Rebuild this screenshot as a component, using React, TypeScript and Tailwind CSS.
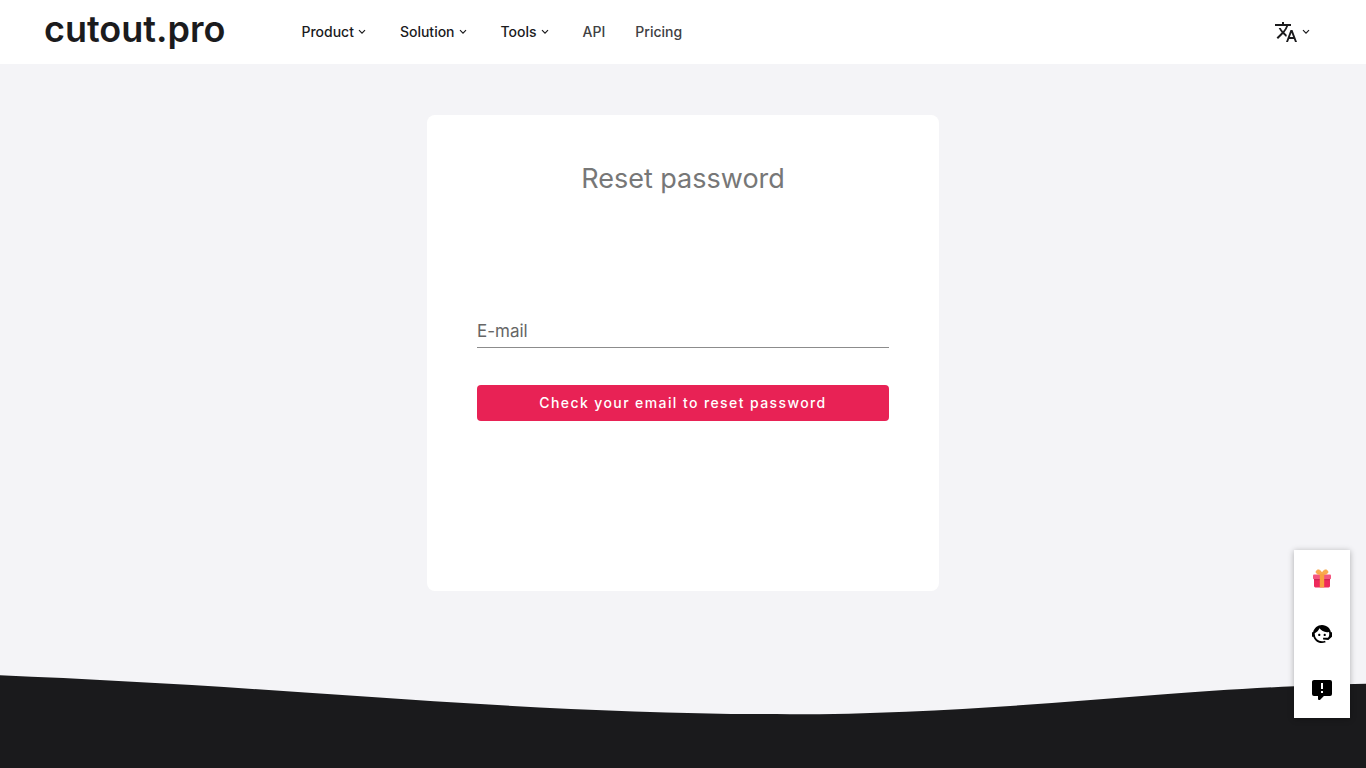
import React, { useState } from "react";
import { MdTranslate } from "react-icons/md";

const menuItems = ["Product", "Solution", "Tools"];

const linkItems = [
  { label: "API", href: "#api" },
  { label: "Pricing", href: "#pricing" },
];

const Chevron: React.FC = () => (
  <svg viewBox="0 0 8 6" className="w-2 h-[6px]" fill="none" stroke="currentColor" strokeWidth="1.2">
    <path d="M1 1.2L4 4.2L7 1.2" />
  </svg>
);

const GiftIcon: React.FC = () => (
  <svg viewBox="0 0 20 20" className="w-5 h-5">
    <path d="M2 11H18V18Q18 19.4 16.6 19.4H3.4Q2 19.4 2 18Z" fill="#ee2a5c" />
    <rect x="1" y="6.4" width="18" height="4.8" rx="1" fill="#f4567f" />
    <rect x="2" y="11.2" width="16" height="1" fill="#c92450" />
    <rect x="7.8" y="6.4" width="4.4" height="13" fill="#f9a03f" />
    <path
      d="M10 6.4C7 6.6 4 6 4.2 3.8C4.5 1.4 8.2 .8 10 5.4C11.8 .8 15.5 1.4 15.8 3.8C16 6 13 6.6 10 6.4Z"
      fill="#f9ac4e"
      stroke="#f9a03f"
      strokeWidth="1"
    />
  </svg>
);

const AgentIcon: React.FC = () => (
  <svg viewBox="0 0 24 24" className="w-6 h-6" fill="currentColor">
    <path d="M18.72,14.76C19.07,13.91 19.26,13 19.26,12C19.26,11.28 19.15,10.59 18.96,9.95C18.31,10.1 17.63,10.18 16.92,10.18C13.86,10.18 11.15,8.67 9.5,6.34C8.61,8.5 6.91,10.26 4.77,11.22C4.73,11.47 4.73,11.74 4.73,12A7.27,7.27 0 0,0 12,19.27C13.05,19.27 14.06,19.04 14.97,18.63C15.54,19.72 15.8,20.26 15.78,20.26C14.14,20.81 12.87,21.08 12,21.08C9.58,21.08 7.27,20.13 5.57,18.42C4.53,17.38 3.76,16.11 3.33,14.73H2V10.18H3.09C3.93,6.04 7.6,2.92 12,2.92C14.4,2.92 16.71,3.87 18.42,5.58C19.69,6.84 20.54,8.45 20.89,10.18H22V14.73H21.94L18.38,18L13.08,17.4V15.73H17.91L18.72,14.76M9.27,11.77C9.57,11.77 9.86,11.89 10.07,12.11C10.28,12.32 10.4,12.61 10.4,12.91C10.4,13.21 10.28,13.5 10.07,13.71C9.86,13.92 9.57,14.04 9.27,14.04C8.64,14.04 8.13,13.54 8.13,12.91C8.13,12.28 8.64,11.77 9.27,11.77M14.72,11.77C15.35,11.77 15.85,12.28 15.85,12.91C15.85,13.54 15.35,14.04 14.72,14.04C14.09,14.04 13.58,13.54 13.58,12.91A1.14,1.14 0 0,1 14.72,11.77Z" />
  </svg>
);

const FeedbackIcon: React.FC = () => (
  <svg viewBox="0 0 24 24" className="w-6 h-6" fill="currentColor" fillRule="evenodd">
    <path d="M13,11H11V5H13V11M13,15H11V13H13V15M9,22A1,1 0 0,1 8,21V18H4A2,2 0 0,1 2,16V4C2,2.89 2.9,2 4,2H20A2,2 0 0,1 22,4V16A2,2 0 0,1 20,18H13.9L10.2,21.71C10,21.9 9.75,22 9.5,22H9Z" />
  </svg>
);

const Header: React.FC = () => (
  <header className="flex items-center h-16 pl-11 pr-14 bg-white">
    <a href="#home" className="pb-1.5 text-4xl font-semibold text-[#1b1b1d]">
      cutout.pro
    </a>

    <nav className="flex items-center gap-[34px] ml-19 text-sm font-medium">
      {menuItems.map((label) => (
        <button key={label} className="flex items-center gap-1">
          {label}
          <Chevron />
        </button>
      ))}
      <div className="flex items-center gap-[30px] text-[#404042]">
        {linkItems.map((item) => (
          <a key={item.label} href={item.href}>
            {item.label}
          </a>
        ))}
      </div>
    </nav>

    <button aria-label="Language" className="flex items-center gap-1 ml-auto">
      <MdTranslate className="w-6 h-6" />
      <Chevron />
    </button>
  </header>
);

const ResetCard: React.FC = () => {
  const [email, setEmail] = useState("");

  const handleSubmit = (e: React.FormEvent) => {
    e.preventDefault();
  };

  return (
    <form
      onSubmit={handleSubmit}
      className="w-full max-w-lg px-[50px] pt-11 pb-[170px] bg-white rounded-lg"
    >
      <h1 className="text-[27px] leading-10 text-center text-[#777777]">Reset password</h1>

      <div className="relative mt-[116px] border-b border-[#8c8c8c]">
        {/* label sits inside the field until something is typed */}
        {!email && (
          <label
            htmlFor="email"
            className="absolute left-0 top-0 text-[17px] leading-8 text-[#666666] pointer-events-none"
          >
            E-mail
          </label>
        )}
        <input
          id="email"
          type="email"
          aria-label="E-mail"
          value={email}
          onChange={(e) => setEmail(e.target.value)}
          className="block w-full h-8 text-[17px] outline-none"
        />
      </div>

      <button
        type="submit"
        className="block w-full h-9 mt-[37px] rounded bg-[#e82255] text-sm font-medium tracking-widest text-white"
      >
        Check your email to reset password
      </button>
    </form>
  );
};

const SideTools: React.FC = () => (
  <div className="fixed right-4 bottom-[50px] w-14 bg-white text-black shadow-[0_1px_6px_rgba(0,0,0,0.3)]">
    <button aria-label="Gift" className="flex items-center justify-center w-full h-14">
      <GiftIcon />
    </button>
    <button aria-label="Support" className="flex items-center justify-center w-full h-14">
      <AgentIcon />
    </button>
    <button aria-label="Feedback" className="flex items-center justify-center w-full h-14">
      <FeedbackIcon />
    </button>
  </div>
);

const App: React.FC = () => {
  return (
    <div className="flex flex-col min-h-screen bg-[#f4f4f7] text-[#1b1b1d] font-['Inter',sans-serif]">
      <Header />

      <main className="flex justify-center px-4 pt-[51px] pb-[83px]">
        <ResetCard />
      </main>

      <footer className="flex flex-col flex-1">
        <svg
          viewBox="0 0 1366 44"
          preserveAspectRatio="none"
          className="block w-full h-11 text-[#1a1a1c]"
          fill="currentColor"
        >
          <path d="M0 1.3C100 5.5 205 11.5 305 18.5C470 30 620 40.2 790 40.2C920 40.2 1040 30 1158 20.8C1220 16 1300 11 1366 9.8V44H0Z" />
        </svg>
        <div className="flex-1 min-h-12 bg-[#1a1a1c]" />
      </footer>

      <SideTools />
    </div>
  );
};

export default App;
